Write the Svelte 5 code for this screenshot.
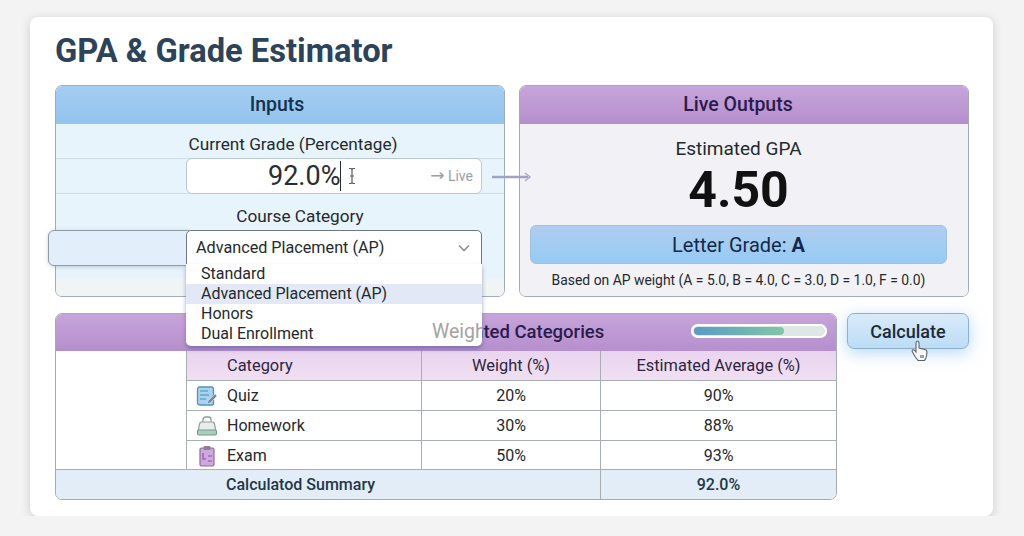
<script>
    const options = ['Standard', 'Advanced Placement (AP)', 'Honors', 'Dual Enrollment'];
    const rows = [
        { name: 'Quiz', weight: '20%', avg: '90%', icon: 'quiz' },
        { name: 'Homework', weight: '30%', avg: '88%', icon: 'homework' },
        { name: 'Exam', weight: '50%', avg: '93%', icon: 'exam' }
    ];
</script>

<main class="card">
    <h1>GPA &amp; Grade Estimator</h1>

    <div class="top">
        <section class="panel inputs">
            <h2 class="head blue">Inputs</h2>
            <div class="inputs-body">
                <div class="label first">Current Grade (Percentage)</div>
                <div class="field-row">
                    <div class="grade-input">
                        <span class="value">92.0%</span>
                        <svg class="ibeam" width="10" height="18" viewBox="0 0 10 18"><path d="M2 1.500h2l1 1 1-1h2M5 2.500v13M2 16.500h2l1-1 1 1h2M3 9h4" fill="none" stroke="#55595c" stroke-width="1.200"/></svg>
                        <span class="live"><span class="live-arrow">→</span> Live</span>
                    </div>
                </div>
                <div class="label second">Course Category</div>
                <div class="select-row">
                    <div class="strip"></div>
                    <div class="select-wrap">
                        <div class="select">
                            <span>Advanced Placement (AP)</span>
                            <svg width="12" height="8" viewBox="0 0 12 8"><path d="M1 1.500l5 5 5-5" fill="none" stroke="#7d8790" stroke-width="1.400"/></svg>
                        </div>
                        <ul class="menu">
                            {#each options as opt, i}
                                <li class:active={i === 1}>{opt}</li>
                            {/each}
                            <span class="ghost">Weigh</span>
                        </ul>
                    </div>
                </div>
            </div>
            <svg class="flow-arrow" width="40" height="12" viewBox="0 0 40 12"><path d="M0 6h36" stroke="#9ea3c4" stroke-width="2.500"/><path d="M33 2l5 4-5 4" fill="none" stroke="#a9acc6" stroke-width="1.500"/></svg>
        </section>

        <section class="panel outputs">
            <h2 class="head purple">Live Outputs</h2>
            <div class="outputs-body">
                <div class="est">Estimated GPA</div>
                <div class="gpa">4.50</div>
                <div class="letter">Letter Grade: <b>A</b></div>
                <div class="note">Based on AP weight (A = 5.0, B = 4.0, C = 3.0, D = 1.0, F = 0.0)</div>
            </div>
        </section>
    </div>

    <div class="bottom">
        <section class="panel weights">
            <div class="head purple weights-head">
                <h2>Weighted Categories</h2>
                <div class="progress"><div class="fill"></div></div>
            </div>
            <table>
                <colgroup>
                    <col style="width:131px" />
                    <col style="width:235px" />
                    <col style="width:179px" />
                    <col />
                </colgroup>
                <thead>
                    <tr>
                        <td class="blank"></td>
                        <th class="cat">Category</th>
                        <th>Weight (%)</th>
                        <th>Estimated Average (%)</th>
                    </tr>
                </thead>
                <tbody>
                    {#each rows as row}
                        <tr>
                            <td class="blank"></td>
                            <td class="cat">
                                <span class="ico">
                                    {#if row.icon === 'quiz'}
                                        <svg width="22" height="22" viewBox="0 0 22 22">
                                            <rect x="1.500" y="2" width="16" height="18" rx="2" fill="#a9d3ec" stroke="#4f93bd" stroke-width="1.300"/>
                                            <path d="M4 6h8M4 10h9M4 14h6" stroke="#4a8db8" stroke-width="1.200"/>
                                            <path d="M12 16l7-7 2 2-7 7-3 1z" fill="#6b8a9a" stroke="#dfeef6" stroke-width=".6"/>
                                        </svg>
                                    {:else if row.icon === 'homework'}
                                        <svg width="22" height="22" viewBox="0 0 22 22">
                                            <path d="M7 7V4.500q0-2.500 2.500-2.500h3q2.500 0 2.500 2.500V7" fill="none" stroke="#8a9f97" stroke-width="1.300"/>
                                            <path d="M5.500 7h11q1.500 0 2 2l1.500 8H2l1.500-8q.5-2 2-2z" fill="#e6eeea" stroke="#8a9f97" stroke-width="1.200"/>
                                            <rect x="1.500" y="15" width="19" height="5" rx="1.500" fill="#a9cfbc" stroke="#74998a" stroke-width="1.100"/>
                                        </svg>
                                    {:else}
                                        <svg width="22" height="22" viewBox="0 0 22 22">
                                            <rect x="4" y="3" width="14" height="18" rx="1.500" fill="#cfa9de" stroke="#8b6a9e" stroke-width="1.200"/>
                                            <rect x="7.500" y="1" width="7" height="4" rx="1" fill="#8c7f96"/>
                                            <path d="M7 8v6h3M12 11h4M12 16h4" fill="none" stroke="#8457a3" stroke-width="1.200"/>
                                        </svg>
                                    {/if}
                                </span>
                                {row.name}
                            </td>
                            <td>{row.weight}</td>
                            <td>{row.avg}</td>
                        </tr>
                    {/each}
                </tbody>
                <tfoot>
                    <tr>
                        <td colspan="3" class="sum-label">Calculatod Summary</td>
                        <td class="sum-value">92.0%</td>
                    </tr>
                </tfoot>
            </table>
        </section>

        <div class="calc-wrap">
            <button type="button">Calculate</button>
            <svg class="hand" width="18" height="22" viewBox="0 0 18 22">
                <path d="M5 10V3q0-2 1.500-2T8 3v5l6 1.500q2 .5 2 2.500l-.5 4q-.5 3-2 4.500H7q-1.500-2-3-4L1.500 12q-1-1.500 .5-2.200 1-.4 3 2.200z" fill="#f4f6f8" stroke="#5d6468" stroke-width="1.100"/>
                <path d="M9 15h4v3H9z" fill="#9aa0a4"/>
            </svg>
        </div>
    </div>
</main>

<style>
    :global(body) {
        background: #f3f3f3;
        font-family: Roboto, "Liberation Sans", sans-serif;
        color: #24292e;
    }

    .card {
        box-sizing: border-box;
        width: 963px;
        height: 499px;
        margin: 17px 0 0 30px;
        padding: 0 24px 0 25px;
        background: #fff;
        border-radius: 8px;
        box-shadow: 0 2px 10px rgba(60, 70, 80, .22);
        overflow: hidden;
    }

    h1 {
        margin: 0;
        padding-top: 15px;
        height: 68px;
        box-sizing: border-box;
        font-size: 32.700px;
        line-height: 38px;
        font-weight: 700;
        color: #2c4359;
    }

    .top {
        display: flex;
        gap: 14px;
    }

    .panel {
        position: relative;
        box-sizing: border-box;
        border: 1px solid #a4adb3;
        border-radius: 7px;
    }

    .inputs, .outputs {
        width: 450px;
        height: 212px;
    }

    .head {
        margin: 0;
        height: 38px;
        line-height: 37px;
        text-align: center;
        font-size: 19.500px;
        font-weight: 500;
        border-radius: 6px 6px 0 0;
    }

    .blue {
        background: linear-gradient(#a5cdf0, #92c4ee);
        color: #14304f;
    }

    .purple {
        background: linear-gradient(#c7a4da, #b58fcd);
        color: #2c1b4d;
    }

    .outputs .head {
        padding-right: 12px;
    }

    .inputs .head {
        padding-right: 6px;
        box-sizing: border-box;
    }

    .inputs-body {
        height: 172px;
        border-radius: 0 0 6px 6px;
        background: linear-gradient(#e8f4fc 0, #e8f4fc 155px, #f0f4f4 155px);
    }

    .label {
        font-size: 17.200px;
        line-height: 20px;
        text-align: center;
    }

    .label.first {
        padding: 10px 0 4px 26px;
    }

    .label.second {
        padding: 12px 0 4px 40px;
    }

    .field-row {
        padding-left: 130px;
        height: 36px;
        border-top: 1px solid #cfdde6;
        border-bottom: 1px solid #cfdde6;
        box-sizing: border-box;
    }

    .grade-input {
        box-sizing: border-box;
        display: flex;
        align-items: center;
        width: 296px;
        height: 36px;
        margin-top: -1px;
        padding-left: 81px;
        background: #fff;
        border: 1px solid #b9c8d2;
        border-radius: 6px;
    }

    .value {
        font-size: 27px;
        color: #2a2d30;
        border-right: 1.500px solid #2a2d30;
        line-height: 30px;
    }

    .ibeam {
        margin-left: 6px;
    }

    .live {
        margin-left: auto;
        margin-right: 8px;
        font-size: 14px;
        color: #9aa2a8;
    }

    .live-arrow {
        font-family: "DejaVu Sans", sans-serif;
        font-size: 17px;
        line-height: 14px;
    }

    .flow-arrow {
        position: absolute;
        left: 436px;
        top: 85px;
        z-index: 3;
    }

    .select-row {
        display: flex;
        margin-left: -8px;
    }

    .strip {
        box-sizing: border-box;
        width: 145px;
        height: 36px;
        margin-right: -7px;
        background: #e2effa;
        border: 1px solid #8f9ca6;
        border-radius: 6px;
        box-shadow: 0 1px 4px rgba(90, 110, 130, .3);
    }

    .select-wrap {
        position: relative;
        z-index: 5;
    }

    .select {
        box-sizing: border-box;
        display: flex;
        align-items: center;
        justify-content: space-between;
        width: 296px;
        height: 35px;
        padding: 0 11px 0 9px;
        background: #fff;
        border: 1px solid #6f7880;
        border-radius: 5px 5px 0 0;
        font-size: 16.200px;
    }

    .menu {
        position: absolute;
        left: 0;
        top: 34px;
        box-sizing: border-box;
        width: 296px;
        height: 82px;
        margin: 0;
        padding: 0;
        list-style: none;
        background: #fff;
        border-radius: 0 0 5px 5px;
        box-shadow: 0 3px 4px rgba(90, 90, 150, .55);
        overflow: hidden;
    }

    .menu li {
        height: 20px;
        line-height: 19px;
        padding-left: 15px;
        font-size: 16px;
    }

    .menu li.active {
        background: #e3e8f6;
    }

    .ghost {
        position: absolute;
        left: 246px;
        top: 56px;
        font-size: 19.500px;
        color: #a3a3a3;
    }

    .outputs-body {
        box-sizing: border-box;
        height: 172px;
        padding: 0 21px 0 10px;
        background: #f2f2f6;
        border-radius: 0 0 6px 6px;
        text-align: center;
    }

    .est {
        padding-top: 14px;
        font-size: 19px;
        line-height: 22px;
    }

    .gpa {
        font-size: 50px;
        font-weight: 700;
        line-height: 54px;
        margin-top: 3px;
        color: #111;
    }

    .letter {
        height: 39px;
        line-height: 38px;
        margin-top: 8px;
        background: linear-gradient(#afcdf0, #96cbf3);
        border: 1px solid #a3c0dc;
        box-sizing: border-box;
        border-radius: 6px;
        font-size: 20px;
        font-weight: 400;
        color: #13294b;
    }

    .letter b {
        font-weight: 700;
    }

    .note {
        margin-top: 7px;
        font-size: 13.900px;
        line-height: 18px;
    }

    .bottom {
        display: flex;
        align-items: flex-start;
        gap: 10px;
        margin-top: 16px;
    }

    .weights {
        width: 783px;
        height: 187px;
    }

    .weights-head {
        position: relative;
        height: 37px;
        display: flex;
        align-items: center;
    }

    .weights-head h2 {
        margin: 0 0 0 376px;
        font-size: 18.500px;
        font-weight: 500;
    }

    .progress {
        position: absolute;
        left: 635px;
        top: 10px;
        box-sizing: border-box;
        width: 136px;
        height: 14px;
        padding: 3px;
        background: #dfe6e6;
        border-radius: 7px;
        box-shadow: inset 0 0 0 2px #fff;
    }

    .fill {
        width: 90px;
        height: 8px;
        border-radius: 4px;
        background: linear-gradient(90deg, #5a9bc6, #82c6a6);
    }

    table {
        width: 100%;
        table-layout: fixed;
        border-collapse: separate;
        border-spacing: 0;
        font-size: 16px;
    }

    th, td {
        height: 30px;
        padding: 0;
        text-align: center;
        font-weight: 400;
        border-right: 1px solid #a9aeb3;
        border-bottom: 1px solid #a9aeb3;
        box-sizing: border-box;
    }

    tbody tr:last-child td {
        height: 29px;
    }

    tr > :last-child {
        border-right: 0;
    }

    th {
        background: linear-gradient(#e9d4ee, #f0dff2);
        color: #2e2540;
        font-size: 16.400px;
    }

    .blank {
        border-bottom: 0;
        background: #fff;
    }

    tbody tr:last-child .blank {
        border-bottom: 1px solid #a9aeb3;
    }

    .cat {
        text-align: left;
        padding-left: 40px;
        position: relative;
    }

    .ico {
        position: absolute;
        left: 9px;
        top: 4px;
        line-height: 0;
    }

    tfoot td {
        background: #e2edf7;
        height: 29px;
        font-weight: 500;
        border-bottom: 0;
        color: #243647;
    }

    tfoot td.sum-label {
        text-align: left;
        padding-left: 170px;
        border-radius: 0 0 0 6px;
    }

    tfoot td.sum-value {
        border-radius: 0 0 6px 0;
    }

    .calc-wrap {
        position: relative;
    }

    button {
        display: block;
        width: 122px;
        height: 36px;
        padding: 0;
        font: 500 18px Roboto, sans-serif;
        color: #1d2a38;
        background: linear-gradient(#d9ebfa, #bcdcf5);
        border: 1px solid #8eb0cb;
        border-radius: 7px;
        box-shadow: 0 4px 16px rgba(120, 185, 235, .55);
    }

    .hand {
        position: absolute;
        left: 64px;
        top: 27px;
    }
</style>
